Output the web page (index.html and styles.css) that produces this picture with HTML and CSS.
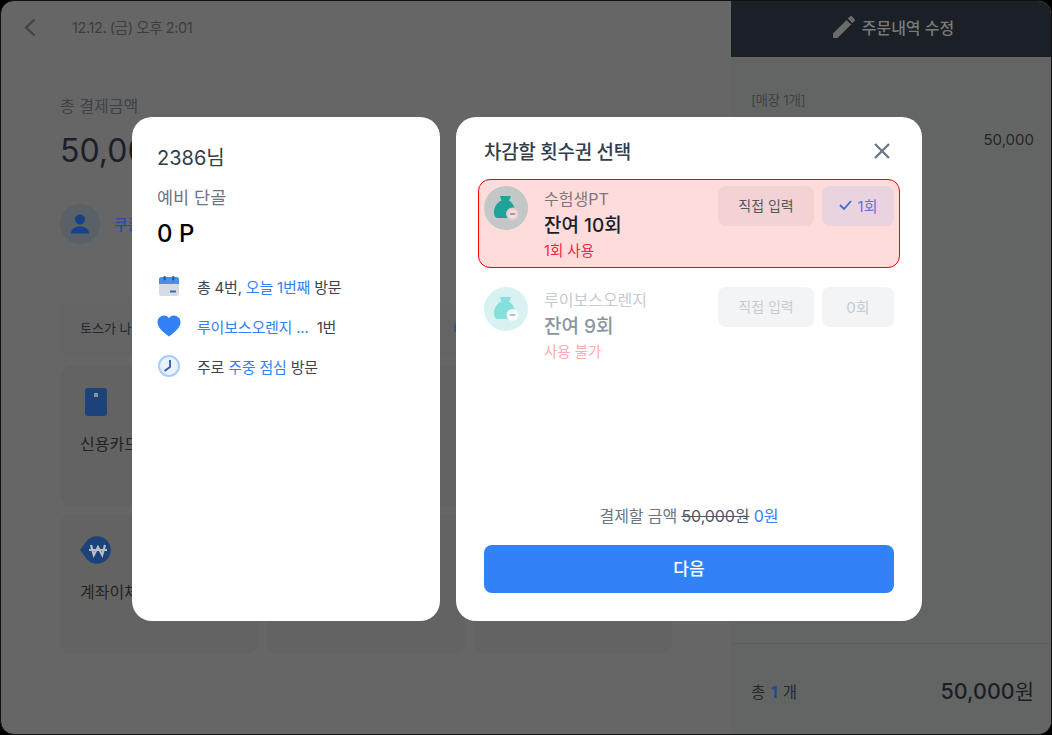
FILE: index.html
```html
<!DOCTYPE html>
<html lang="ko">
<head>
    <meta charset="UTF-8">
    <meta name="viewport" content="width=device-width, initial-scale=1.0">
    <title>횟수권 선택</title>
    <link rel="stylesheet" href="styles.css">
</head>
<body>
    <div class="app">
        <div class="pay">
            <div class="pay-top">
                <svg class="back" width="13" height="19" viewBox="0 0 13 19"><path d="M11.500 1.500 3 9.500l8.500 8" fill="none" stroke="#3f4347" stroke-width="2.200"/></svg>
                <span class="pay-date">12.12. (금) 오후 2:01</span>
            </div>
            <div class="pay-label">총 결제금액</div>
            <div class="pay-total">50,000원</div>
            <div class="customer">
                <span class="avatar">
                    <svg width="18" height="20" viewBox="0 0 18 20"><circle cx="9" cy="5.500" r="5" fill="#154287"/><path d="M0 19.500c0-4.500 4-7 9-7s9 2.500 9 7z" fill="#154287"/></svg>
                </span>
                <span class="customer-name">쿠폰 적용</span>
            </div>
            <div class="toss">
                <span class="toss-text">토스가 나를 먼저 알아보는 결제</span>
                <span class="toss-link">바로가기</span>
            </div>
            <div class="methods">
                <div class="method">
                    <span class="method-icon">
                        <svg class="card-icon" width="22" height="28" viewBox="0 0 22 28"><rect width="22" height="28" rx="3" fill="#1c4379"/><rect x="9" y="5" width="4" height="4" fill="#8893a0"/></svg>
                    </span>
                    <span>신용카드</span>
                </div>
                <div class="method"></div>
                <div class="method"></div>
                <div class="method">
                    <span class="method-icon">
                        <svg width="31" height="28" viewBox="0 0 31 28"><path d="M0 14 7 4.500a13.800 13.800 0 1 1 0 19z" fill="#1c4379"/><path d="M11 9l2.800 10 4.200-8 4.200 8L25 9M9 14h18" fill="none" stroke="#b9bec4" stroke-width="2.200"/></svg>
                    </span>
                    <span>계좌이체</span>
                </div>
                <div class="method"></div>
                <div class="method"></div>
            </div>
        </div>
        <div class="order">
            <div class="order-head">
                <svg width="22" height="22" viewBox="3 3 18 18"><path d="M3 17.250V21h3.750L17.810 9.940l-3.750-3.750L3 17.250zM20.710 7.040a1 1 0 0 0 0-1.410l-2.340-2.340a1 1 0 0 0-1.410 0l-1.830 1.830 3.750 3.750 1.830-1.830z" fill="#6b6b6b"/></svg>
                <span>주문내역 수정</span>
            </div>
            <div class="order-body">
                <div class="order-tag">[매장 1개]</div>
                <div class="order-price">50,000</div>
            </div>
            <div class="order-foot">
                <span class="order-count">총 <b>1</b> 개</span>
                <span class="order-sum">50,000<small>원</small></span>
            </div>
        </div>
    </div>

    <div class="modals">
        <div class="modal member">
            <div class="member-name">2386님</div>
            <div class="member-label">예비 단골</div>
            <div class="member-point">0 P</div>
            <ul class="facts">
                <li>
                    <svg width="24" height="24" viewBox="0 0 24 24"><rect x="2" y="3" width="20" height="19" rx="2.500" fill="#d6dce5"/><path d="M2 5.500A2.500 2.500 0 0 1 4.500 3h15A2.500 2.500 0 0 1 22 5.500V10H2z" fill="#4a90e8"/><rect x="6.500" y="2" width="2.400" height="4.500" rx="1.200" fill="#2b5ea8"/><rect x="15.100" y="2" width="2.400" height="4.500" rx="1.200" fill="#2b5ea8"/><rect x="13" y="16.500" width="6" height="2" fill="#3b6db0"/></svg>
                    <span>총 4번, <em>오늘 1번째</em> 방문</span>
                </li>
                <li>
                    <svg width="24" height="24" viewBox="0 0 24 24"><path d="M12 22.500C5 17 0.500 13.300 0.500 8A6.500 6.500 0 0 1 12 4a6.500 6.500 0 0 1 11.500 4c0 5.300-4.500 9-11.500 14.500z" fill="#3182f6"/></svg>
                    <span><em>루이보스오렌지 ...</em>&nbsp; 1번</span>
                </li>
                <li>
                    <svg width="24" height="24" viewBox="0 0 24 24"><circle cx="12" cy="12" r="10" fill="#eaf2fe" stroke="#a9ccfb" stroke-width="2"/><path d="M13 6v7l-5.500 4" fill="none" stroke="#2b5ea8" stroke-width="1.800"/></svg>
                    <span>주로 <em>주중 점심</em> 방문</span>
                </li>
            </ul>
        </div>

        <div class="modal tickets">
            <div class="tickets-head">
                <h2>차감할 횟수권 선택</h2>
                <svg width="18" height="18" viewBox="0 0 18 18"><path d="M2 2l14 14M16 2 2 16" stroke="#6b7684" stroke-width="2.300"/></svg>
            </div>

            <div class="ticket active">
                <span class="bag">
                    <svg width="44" height="44" viewBox="0 0 44 44"><path d="M16 10.500q0-.5 1-.5h9q1 0 .8 1L25 14.500c3.500 2 6 6.500 6 11 0 4-1.500 6.500-4 6.500H14c-3 0-4-2.500-4-6 0-5 3-9.500 7.500-11.500z" fill="#1fa298"/><circle cx="28.500" cy="28" r="6.500" fill="#e8c8c9"/><circle cx="28.500" cy="28" r="4.500" fill="#f3dfdf"/><rect x="25.800" y="27.300" width="5.400" height="1.400" fill="#7b8794"/></svg>
                </span>
                <div class="ticket-info">
                    <div class="ticket-name">수험생PT</div>
                    <div class="ticket-left">잔여 10회</div>
                    <div class="ticket-note">1회 사용</div>
                </div>
                <div class="ticket-btn direct">직접 입력</div>
                <div class="ticket-btn count">
                    <svg width="13" height="10" viewBox="0 0 13 10"><path d="M1 5l4 4 7-8" fill="none" stroke="#3b6fd8" stroke-width="1.800"/></svg>
                    1회
                </div>
            </div>

            <div class="ticket disabled">
                <span class="bag">
                    <svg width="44" height="44" viewBox="0 0 44 44"><path d="M16 10.500q0-.5 1-.5h9q1 0 .8 1L25 14.500c3.500 2 6 6.500 6 11 0 4-1.500 6.500-4 6.500H14c-3 0-4-2.500-4-6 0-5 3-9.500 7.500-11.500z" fill="#85dfda"/><circle cx="28.500" cy="28" r="6" fill="#f7fbfb"/><rect x="25.800" y="27.300" width="5.400" height="1.400" fill="#9ba6b0"/></svg>
                </span>
                <div class="ticket-info">
                    <div class="ticket-name">루이보스오렌지</div>
                    <div class="ticket-left">잔여 9회</div>
                    <div class="ticket-note">사용 불가</div>
                </div>
                <div class="ticket-btn direct">직접 입력</div>
                <div class="ticket-btn count">0회</div>
            </div>

            <div class="tickets-foot">
                <div class="amount">결제할 금액 <s>50,000원</s> <em>0원</em></div>
                <button class="next">다음</button>
            </div>
        </div>
    </div>
</body>
</html>
```

FILE: styles.css
```css
* {
    box-sizing: border-box;
}

html, body {
    margin: 0;
    padding: 0;
    height: 100%;
    overflow: hidden;
    background: #000;
}

body {
    font-family: Inter, "Noto Sans CJK KR", sans-serif;
    color: #191f28;
    position: relative;
}

/* page behind the modals, colours are the dimmed ones */
.app {
    display: flex;
    height: 735px;
    background: #666;
    border: 1px solid #111;
    border-radius: 14px;
    overflow: hidden;
}

.pay {
    width: 730px;
    padding: 0 59px;
}

.pay-top {
    display: flex;
    align-items: center;
    height: 53px;
    margin-left: -37px;
}

.back {
    margin-right: 36px;
}

.pay-date {
    padding-bottom: 2px;
    font-size: 14.500px;
    letter-spacing: -0.400px;
    color: #3a3d42;
}

.pay-label {
    margin-top: 41px;
    font-size: 16px;
    line-height: 23px;
    color: #3d4248;
}

.pay-total {
    margin-top: 11px;
    font-size: 32px;
    line-height: 44px;
    white-space: nowrap;
    color: #1c2026;
}

.customer {
    display: flex;
    align-items: center;
    gap: 14px;
    margin-top: 31px;
}

.avatar {
    display: flex;
    align-items: center;
    justify-content: center;
    width: 40px;
    height: 40px;
    border-radius: 50%;
    background: #5a6068;
}

.customer-name {
    padding-bottom: 2px;
    font-size: 15px;
    font-weight: 500;
    color: #2b4a9a;
}

.toss {
    display: flex;
    align-items: center;
    height: 52px;
    margin-top: 59px;
    padding: 0 0 4px 20px;
    border-radius: 10px;
    background: #646464;
    font-size: 13px;
    color: #23282e;
    white-space: nowrap;
}

.toss-text {
    width: 373px;
}

.toss-link {
    color: #1c4a9a;
}

.methods {
    display: grid;
    grid-template-columns: repeat(3, 1fr);
    gap: 8px 9px;
    margin-top: 11px;
}

.method {
    display: flex;
    flex-direction: column;
    align-items: flex-start;
    gap: 15px;
    height: 140px;
    padding: 22px 20px;
    border-radius: 12px;
    background: #636363;
    font-size: 16px;
    color: #1f2328;
}

.method-icon {
    display: flex;
    height: 28px;
}

.card-icon {
    margin-left: 5px;
}

.order {
    flex: 1;
    display: flex;
    flex-direction: column;
    background: #636564;
}

.order-head {
    display: flex;
    align-items: center;
    justify-content: center;
    gap: 7px;
    height: 56px;
    padding: 0 0 4px 5px;
    background: #1b2026;
    color: #7a7a7a;
    font-size: 16px;
    font-weight: 500;
}

.order-body {
    flex: 1;
    padding: 32px 17px 0 20px;
}

.order-tag {
    font-size: 13.500px;
    letter-spacing: -0.300px;
    color: #3e4246;
}

.order-price {
    margin-top: 21px;
    text-align: right;
    font-size: 15px;
    color: #232629;
}

.order-foot {
    display: flex;
    align-items: center;
    justify-content: space-between;
    height: 91px;
    padding: 1px 17px 0 20px;
    border-top: 1px solid #5c5e5d;
}

.order-count {
    padding-top: 2px;
    font-size: 15.500px;
    color: #26292d;
}

.order-count b {
    margin: 0 1px;
    color: #1c4a9a;
}

.order-sum {
    font-size: 21.500px;
    font-weight: 500;
    color: #1b1f24;
}

.order-sum small {
    font-size: 21px;
    font-weight: 400;
}

/* the two cards on top */
.modals {
    position: absolute;
    top: 117px;
    left: 132px;
    display: flex;
    gap: 16px;
}

.modal {
    height: 504px;
    background: #fff;
    border-radius: 20px;
}

.member {
    width: 308px;
    padding: 28px 25px;
}

.member-name {
    font-size: 20px;
    line-height: 26px;
    color: #333d4b;
}

.member-label {
    margin-top: 15px;
    font-size: 17.500px;
    line-height: 24px;
    color: #6b7684;
}

.member-point {
    margin-top: 9px;
    font-size: 24px;
    font-weight: 500;
    line-height: 30px;
    color: #000;
}

.facts {
    list-style: none;
    margin: 17px 0 0;
    padding: 0;
}

.facts li {
    display: flex;
    align-items: center;
    gap: 16px;
    height: 40px;
    font-size: 15px;
    letter-spacing: -0.200px;
    color: #3b4450;
}

.facts em,
.amount em {
    font-style: normal;
    color: #3182f6;
}

.tickets {
    display: flex;
    flex-direction: column;
    width: 466px;
    padding: 0 28px 28px;
}

.tickets-head {
    display: flex;
    align-items: center;
    justify-content: space-between;
    height: 62px;
    padding-top: 4px;
}

.tickets-head h2 {
    margin: 0;
    font-size: 19px;
    font-weight: 500;
    letter-spacing: -0.300px;
    color: #333d4b;
}

.tickets-head svg {
    margin: 2px 3px 0 0;
}

.ticket {
    display: flex;
    height: 89px;
    margin: 0 -6px 12px;
    padding: 6px 5px;
    border: 1px solid transparent;
    border-radius: 12px;
}

.ticket.active {
    background: #ffdcdc;
    border-color: #f00;
}

.bag {
    display: flex;
    flex: none;
    width: 44px;
    height: 44px;
    border-radius: 50%;
    background: #c2c8c8;
}

.ticket-info {
    flex: 1;
    margin-left: 16px;
}

.ticket-name {
    font-size: 16px;
    line-height: 26px;
    color: #7d7578;
}

.ticket-left {
    font-size: 19px;
    line-height: 28px;
    font-weight: 500;
    color: #191f28;
}

.ticket-note {
    font-size: 14.500px;
    line-height: 22px;
    color: #ff1f3d;
}

.ticket-btn {
    display: flex;
    align-items: center;
    justify-content: center;
    gap: 6px;
    height: 40px;
    padding-bottom: 2px;
    border-radius: 8px;
    font-size: 14px;
}

.direct {
    width: 96px;
    margin-right: 8px;
    background: #f2d2d3;
    color: #55575f;
}

.count {
    width: 72px;
    background: #e8d3df;
    color: #6a6ed6;
    font-size: 15px;
}

.disabled .bag {
    background: #d8f2f2;
}

.disabled .ticket-name {
    color: #c5cbd2;
}

.disabled .ticket-left {
    color: #8b95a1;
}

.disabled .ticket-note {
    color: #ffaab4;
}

.disabled .ticket-btn {
    background: #f2f4f6;
    color: #c5ccd4;
}

.tickets-foot {
    margin-top: auto;
}

.amount {
    text-align: center;
    font-size: 16px;
    letter-spacing: -0.100px;
    color: #6b7684;
}

.amount s {
    color: #4e5968;
}

.next {
    display: block;
    width: 100%;
    height: 48px;
    margin-top: 18px;
    padding-bottom: 5px;
    border: none;
    border-radius: 8px;
    background: #3182f6;
    color: #fff;
    font-family: inherit;
    font-size: 17px;
    font-weight: 500;
}
```
